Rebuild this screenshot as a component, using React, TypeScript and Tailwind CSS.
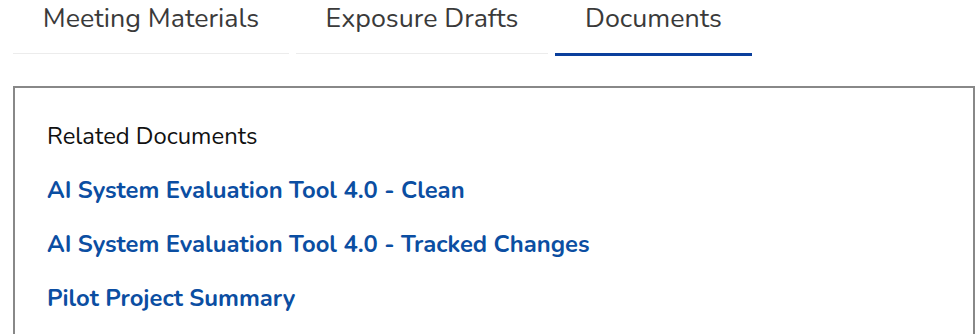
import React from "react";

const tabs = [
  { label: "Meeting Materials", w: "w-[276px]", active: false },
  { label: "Exposure Drafts", w: "w-[252px]", active: false },
  { label: "Documents", w: "w-[197px]", active: true },
];

const links = [
  "AI System Evaluation Tool 4.0 - Clean",
  "AI System Evaluation Tool 4.0 - Tracked Changes",
  "Pilot Project Summary",
];

export default function App() {
  return (
    <div
      className="w-[980px] h-[334px] overflow-hidden bg-white pl-[13px]"
      style={{ fontFamily: '"Nunito", "Lato", sans-serif' }}
    >
      <div className="flex items-start gap-[7px] h-[56px]">
        {tabs.map((t) => (
          <div
            key={t.label}
            className={`${t.w} flex justify-center text-[26.8px] leading-[36px] text-[#3a3a3a] ${
              t.active
                ? "h-[56px] border-b-[3px] border-[#0a3f9c]"
                : "h-[54px] border-b border-[#ececec]"
            }`}
          >
            {t.label}
          </div>
        ))}
      </div>
      <div className="mt-[30px] w-[962px] h-[300px] border-2 border-[#888888] pl-[32px] pt-[33px]">
        <div className="flex flex-col gap-[24px] text-[23.8px] leading-[30px]">
          <div className="text-[#111111]">Related Documents</div>
          {links.map((l) => (
            <a key={l} href="#" className="font-bold text-[#0b4ea2] w-fit">
              {l}
            </a>
          ))}
        </div>
      </div>
    </div>
  );
}
